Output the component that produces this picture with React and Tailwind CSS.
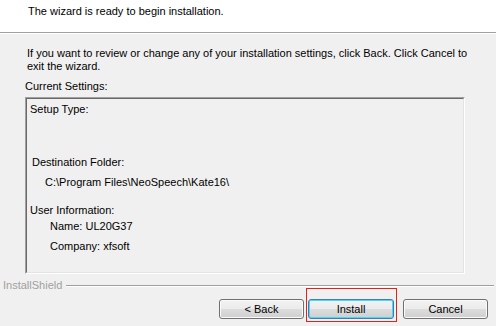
import React from 'react';

const btn =
  'h-[20px] w-[85px] rounded-[3px] border text-[11px] leading-none text-black bg-[linear-gradient(#f2f2f2_0%,#ebebeb_50%,#dddddd_50%,#cfcfcf_100%)]';

const App = () => {
  return (
    <div className="w-[496px] h-[326px] bg-[#f0f0f0] flex flex-col text-[11px] leading-[13px] text-black font-['Liberation_Sans',Arial,sans-serif] overflow-hidden">
      {/* Header */}
      <div className="h-[32px] bg-white pl-[28px] pt-[5px] shrink-0">
        The wizard is ready to begin installation.
      </div>
      <div className="h-px bg-[#a0a0a0] shrink-0" />
      <div className="h-px bg-white shrink-0" />

      {/* Body */}
      <p className="mt-[13px] pl-[27px] pr-[20px]">
        If you want to review or change any of your installation settings, click Back. Click Cancel to
        exit the wizard.
      </p>

      <div className="mt-[7px] pl-[25px]">Current Settings:</div>

      <div className="mt-[4px] ml-[25px] w-[440px] h-[177px] border border-t-[#a0a0a0] border-l-[#a0a0a0] border-r-white border-b-white">
        <div className="h-full border border-t-[#696969] border-l-[#696969] border-r-[#e3e3e3] border-b-[#e3e3e3] pt-[4px]">
          <div className="pl-[3px]">Setup Type:</div>
          <div className="pl-[5px] mt-[40px]">Destination Folder:</div>
          <div className="pl-[18px] mt-[7px]">C:\Program Files\NeoSpeech\Kate16\</div>
          <div className="pl-[3px] mt-[15px]">User Information:</div>
          <div className="pl-[23px] mt-[3px]">Name: UL20G37</div>
          <div className="pl-[23px] mt-[7px]">Company: xfsoft</div>
        </div>
      </div>

      {/* InstallShield separator */}
      <div className="mt-[5px] flex items-center pl-[3px] pr-[2px]">
        <span className="text-[#a0a0a0]">InstallShield</span>
        <div className="ml-[4px] flex-1 flex flex-col">
          <div className="h-px bg-[#a0a0a0]" />
          <div className="h-px bg-white" />
        </div>
      </div>

      {/* Buttons */}
      <div className="mt-[7px] flex pl-[219px]">
        <button className={`${btn} border-[#707070] shadow-[inset_0_0_0_1px_#fbfbfb]`}>&lt; Back</button>
        <div className="relative ml-[4px]">
          <button className={`${btn} w-[86px] border-[#3c7fb1] shadow-[inset_0_0_0_1px_#48d8fb]`}>Install</button>
          <div className="absolute -left-[2px] -top-[11px] w-[91px] h-[34px] border border-[#d9261c] pointer-events-none" />
        </div>
        <button className={`${btn} ml-[9px] border-[#707070] shadow-[inset_0_0_0_1px_#fbfbfb]`}>Cancel</button>
      </div>
    </div>
  );
};

export default App;
